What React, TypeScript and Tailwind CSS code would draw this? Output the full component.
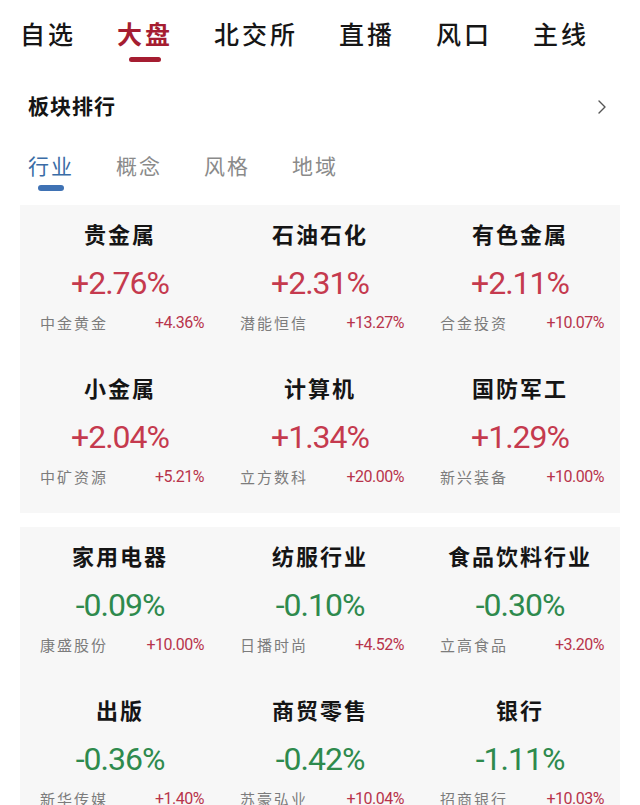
import { ChevronRight } from "lucide-react";

type Cell = { name: string; pct: string; stock: string; stockPct: string };

const groups: Cell[][] = [
  [
    { name: "贵金属", pct: "+2.76%", stock: "中金黄金", stockPct: "+4.36%" },
    { name: "石油石化", pct: "+2.31%", stock: "潜能恒信", stockPct: "+13.27%" },
    { name: "有色金属", pct: "+2.11%", stock: "合金投资", stockPct: "+10.07%" },
    { name: "小金属", pct: "+2.04%", stock: "中矿资源", stockPct: "+5.21%" },
    { name: "计算机", pct: "+1.34%", stock: "立方数科", stockPct: "+20.00%" },
    { name: "国防军工", pct: "+1.29%", stock: "新兴装备", stockPct: "+10.00%" },
  ],
  [
    { name: "家用电器", pct: "-0.09%", stock: "康盛股份", stockPct: "+10.00%" },
    { name: "纺服行业", pct: "-0.10%", stock: "日播时尚", stockPct: "+4.52%" },
    { name: "食品饮料行业", pct: "-0.30%", stock: "立高食品", stockPct: "+3.20%" },
    { name: "出版", pct: "-0.36%", stock: "新华传媒", stockPct: "+1.40%" },
    { name: "商贸零售", pct: "-0.42%", stock: "苏豪弘业", stockPct: "+10.04%" },
    { name: "银行", pct: "-1.11%", stock: "招商银行", stockPct: "+10.03%" },
  ],
];

const topTabs = ["自选", "大盘", "北交所", "直播", "风口", "主线"];
const subTabs = ["行业", "概念", "风格", "地域"];

const cjk = "font-['Noto_Sans_CJK_SC',sans-serif]";
const num = "font-['Roboto','Noto_Sans_CJK_SC',sans-serif]";

const SectorCell = ({ cell }: { cell: Cell }) => {
  const up = cell.pct.startsWith("+");
  return (
    <div className="h-[154px] flex flex-col pt-[16px]">
      <div className={`${cjk} text-center text-[22px] leading-[24px] font-bold tracking-[2px] text-[#151515]`}>
        {cell.name}
      </div>
      <div
        className={`${num} mt-[21px] text-center text-[32px] leading-[34px] tracking-[-1px] ${
          up ? "text-[#c53a4e]" : "text-[#2e8a4d]"
        }`}
      >
        {cell.pct}
      </div>
      <div className="mt-[13px] flex items-center justify-between pl-[20px] pr-[16px] h-[20px]">
        <span className={`${cjk} text-[15px] tracking-[2px] text-[#7c7c7c]`}>{cell.stock}</span>
        <span className={`${num} text-[16px] tracking-[-0.5px] text-[#b8344b]`}>{cell.stockPct}</span>
      </div>
    </div>
  );
};

export default function App() {
  return (
    <div className={`${cjk} w-[640px] h-[805px] bg-white overflow-hidden`}>
      {/* Top nav */}
      <div className="flex gap-[41px] pl-[20px] pt-[18px]">
        {topTabs.map((t) => (
          <div key={t} className="flex flex-col items-center">
            <span
              className={`text-[25px] leading-[30px] tracking-[3px] ${
                t === "大盘" ? "text-[#a51d31] font-bold" : "text-[#161616] font-medium"
              }`}
            >
              {t}
            </span>
            <div className={`mt-[9px] h-[5px] w-[32px] rounded-sm ${t === "大盘" ? "bg-[#a51d31]" : ""}`} />
          </div>
        ))}
      </div>

      {/* Section header */}
      <div className="flex items-center justify-between pl-[28px] pr-[26px] mt-[29px]">
        <span className="text-[21px] leading-[28px] font-bold tracking-[1px] text-[#151515]">板块排行</span>
        <ChevronRight size={24} strokeWidth={1.4} className="text-[#555] mt-[4px]" />
      </div>

      {/* Sub tabs */}
      <div className="flex gap-[42px] pl-[28px] mt-[32px]">
        {subTabs.map((t, i) => (
          <div key={t} className="flex flex-col items-center">
            <span
              className={`text-[21px] leading-[28px] tracking-[2px] ${
                i === 0 ? "text-[#3a6ca6]" : "text-[#8a8a8a]"
              }`}
            >
              {t}
            </span>
            <div className={`mt-[6px] h-[6px] w-[26px] rounded-full ${i === 0 ? "bg-[#3f72b4]" : ""}`} />
          </div>
        ))}
      </div>

      {/* Sector grid */}
      <div className="mx-[20px] mt-[14px] flex flex-col gap-[14px]">
        {groups.map((g, gi) => (
          <div key={gi} className="grid grid-cols-3 bg-[#f7f7f7]">
            {g.map((c) => (
              <SectorCell key={c.name} cell={c} />
            ))}
          </div>
        ))}
      </div>
    </div>
  );
}
